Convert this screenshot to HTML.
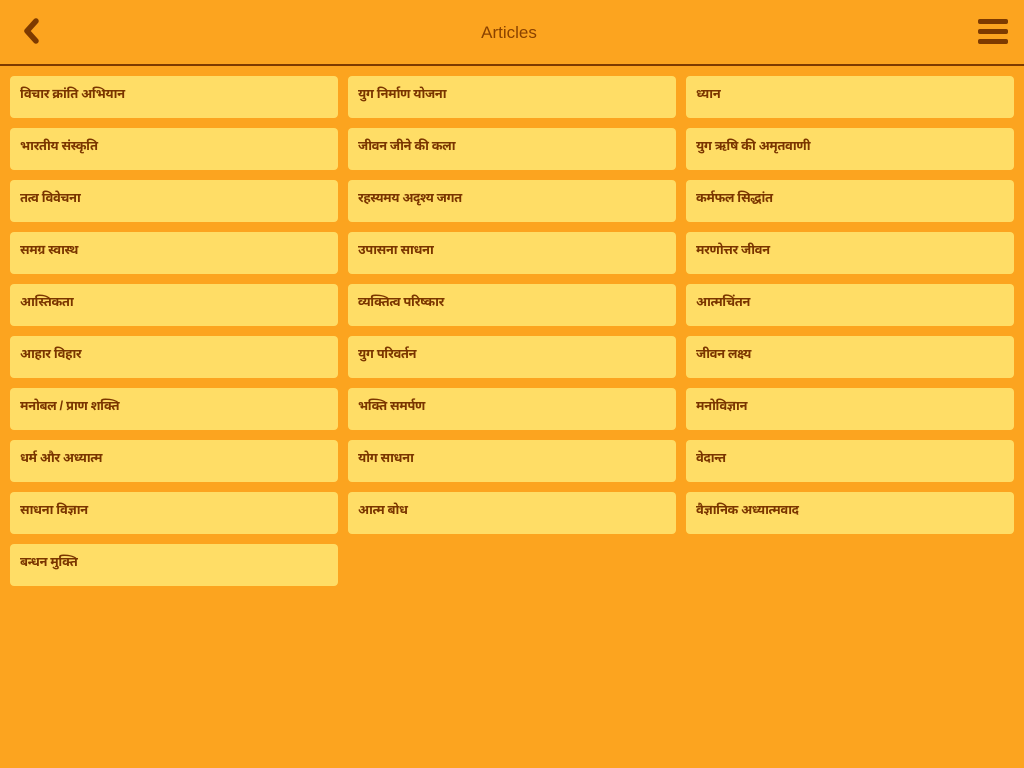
<!DOCTYPE html>
<html><head><meta charset="utf-8"><style>
*{margin:0;padding:0;box-sizing:border-box}
body{width:1024px;height:768px;background:#fca41f;font-family:"Liberation Sans",sans-serif;position:relative;overflow:hidden}
.hdr{position:absolute;left:0;top:0;width:1024px;height:66px;border-bottom:2px solid #7d3a00}
.title{position:absolute;left:0;width:1024px;top:23px;text-align:center;font-size:17px;color:#8a4200;padding-left:-6px}
.card{position:absolute;width:328px;height:42px;background:#ffdd66;border-radius:4px;padding:10px 0 0 10px;font-size:13px;letter-spacing:-0.4px;font-weight:bold;color:#7a3500;font-family:"Liberation Sans","Noto Sans Devanagari","Lohit Devanagari",sans-serif;white-space:nowrap}
.bar{position:absolute;left:978px;width:30px;height:5px;background:#7d3a00;border-radius:2px}
</style></head><body>
<div class="hdr">
<svg style="position:absolute;left:20px;top:17px" width="24" height="30"><path d="M16 4 L7 14 L16 24" fill="none" stroke="#7d3a00" stroke-width="5.5" stroke-linecap="round" stroke-linejoin="round"/></svg>
<div class="title" style="left:-3px">Articles</div>
<div class="bar" style="top:19px"></div><div class="bar" style="top:29px"></div><div class="bar" style="top:39px"></div>
</div>
<div class="card" style="left:10px;top:76px">विचार क्रांति अभियान</div>
<div class="card" style="left:348px;top:76px">युग निर्माण योजना</div>
<div class="card" style="left:686px;top:76px">ध्यान</div>
<div class="card" style="left:10px;top:128px">भारतीय संस्कृति</div>
<div class="card" style="left:348px;top:128px">जीवन जीने की कला</div>
<div class="card" style="left:686px;top:128px">युग ऋषि की अमृतवाणी</div>
<div class="card" style="left:10px;top:180px">तत्व विवेचना</div>
<div class="card" style="left:348px;top:180px">रहस्यमय अदृश्य जगत</div>
<div class="card" style="left:686px;top:180px">कर्मफल सिद्धांत</div>
<div class="card" style="left:10px;top:232px">समग्र स्वास्थ</div>
<div class="card" style="left:348px;top:232px">उपासना साधना</div>
<div class="card" style="left:686px;top:232px">मरणोत्तर जीवन</div>
<div class="card" style="left:10px;top:284px">आस्तिकता</div>
<div class="card" style="left:348px;top:284px">व्यक्तित्व परिष्कार</div>
<div class="card" style="left:686px;top:284px">आत्मचिंतन</div>
<div class="card" style="left:10px;top:336px">आहार विहार</div>
<div class="card" style="left:348px;top:336px">युग परिवर्तन</div>
<div class="card" style="left:686px;top:336px">जीवन लक्ष्य</div>
<div class="card" style="left:10px;top:388px">मनोबल / प्राण शक्ति</div>
<div class="card" style="left:348px;top:388px">भक्ति समर्पण</div>
<div class="card" style="left:686px;top:388px">मनोविज्ञान</div>
<div class="card" style="left:10px;top:440px">धर्म और अध्यात्म</div>
<div class="card" style="left:348px;top:440px">योग साधना</div>
<div class="card" style="left:686px;top:440px">वेदान्त</div>
<div class="card" style="left:10px;top:492px">साधना विज्ञान</div>
<div class="card" style="left:348px;top:492px">आत्म बोध</div>
<div class="card" style="left:686px;top:492px">वैज्ञानिक अध्यात्मवाद</div>
<div class="card" style="left:10px;top:544px">बन्धन मुक्ति</div>
</body></html>
